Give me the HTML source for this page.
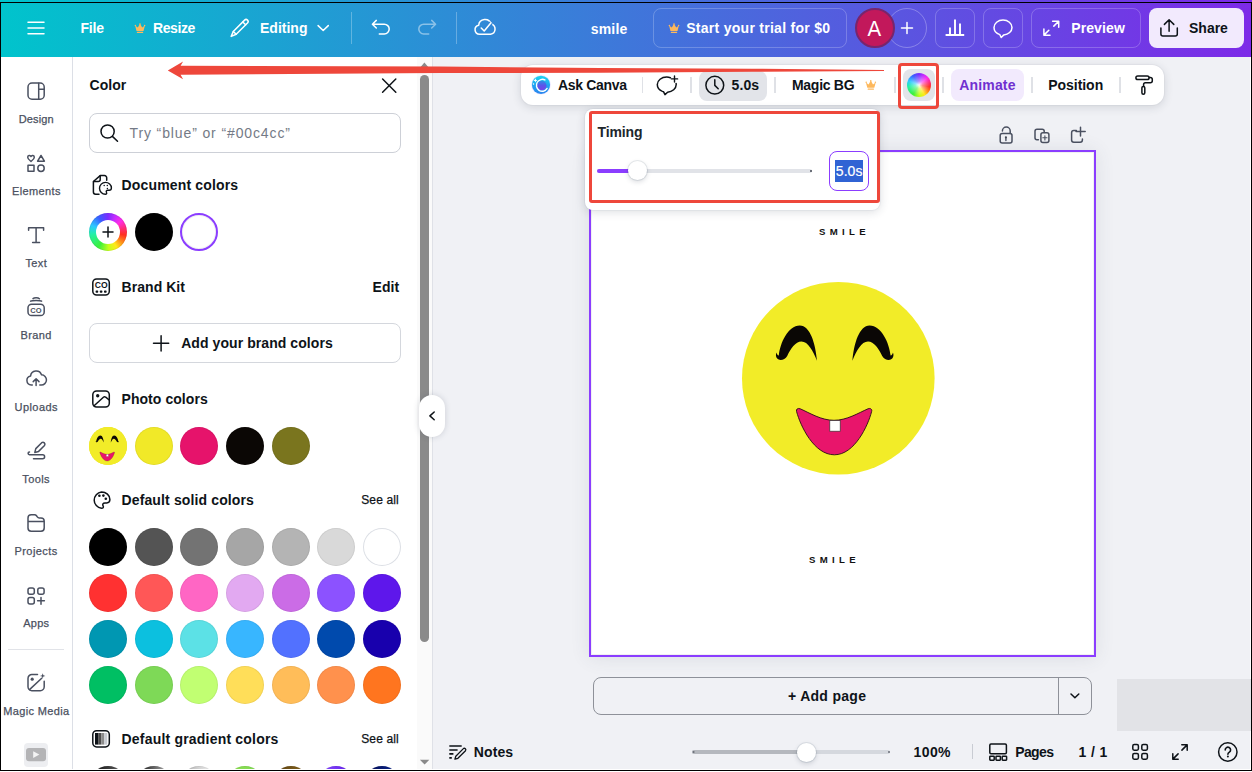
<!DOCTYPE html>
<html><head><meta charset="utf-8">
<style>
*{box-sizing:border-box;margin:0;padding:0}
html,body{width:1252px;height:772px;overflow:hidden}
body{position:relative;background:#f0f1f5;font-family:"Liberation Sans",sans-serif;color:#0e1318}
.a{position:absolute}
.t{position:absolute;white-space:pre;line-height:1;font-weight:700;font-size:14px}
svg{position:absolute;overflow:visible}
.w{color:#fff}
.ic{fill:none;stroke:#0e1318;stroke-width:1.5;stroke-linecap:round;stroke-linejoin:round}
.icw{fill:none;stroke:#fff;stroke-width:1.5;stroke-linecap:round;stroke-linejoin:round}
.ics{fill:none;stroke:#4a5060;stroke-width:1.5;stroke-linecap:round;stroke-linejoin:round}
.hb{position:absolute;top:8px;height:40px;border:1px solid rgba(255,255,255,.22);border-radius:8px}
.sl{position:absolute;font-size:11px;font-weight:400;color:#4a5060;line-height:1;white-space:pre;letter-spacing:.35px;-webkit-text-stroke:.25px #4a5060}
.sw{position:absolute;width:38px;height:38px;border-radius:50%;box-shadow:inset 0 0 0 1px rgba(0,0,0,.06)}
.sep{position:absolute;width:1.8px;top:77.3px;height:15.4px;background:#dfe1e6}
</style></head><body>

<!-- HEADER -->
<div class="a" id="hdr" style="left:0;top:0;width:1252px;height:57px;background:linear-gradient(90deg,#00c4cc 0%,#7d2ae8 100%)"></div>


<!-- header content -->
<svg class="a" style="left:0;top:0" width="1252" height="57" viewBox="0 0 1252 57">
 <g class="icw">
  <path d="M28 22.2H44M28 28H44M28 33.8H44"/>
  <!-- pencil -->
  <g transform="translate(231.2 36.4) rotate(-45)"><path d="M0 0L5 -2.05H21a2.05 2.05 0 0 1 0 4.1H5z"/><path d="M5 -2.05V2.05M18.4 -2.05V2.05"/></g>
  <!-- chevron -->
  <path d="M318.1 25.6l5.1 4.9 5.1-4.9"/>
  <!-- undo -->
  <path d="M376.3 20.4l-3.9 3.8 3.9 3.8M372.8 24.2h11.5a4.9 4.9 0 0 1 0 9.8H379.3"/>
  <!-- redo -->
  <g opacity=".45"><path d="M431.7 20.4l3.9 3.8-3.9 3.8M435.2 24.2h-11.5a4.9 4.9 0 0 0 0 9.8H428.7"/></g>
  <!-- cloud -->
  <path d="M479.6 34.3a4.6 4.6 0 0 1-.9-9.1 6.3 6.3 0 0 1 12.3-1.3 5.3 5.3 0 0 1-.5 10.4z"/>
  <path d="M485.6 29.6l5.4-6.8" stroke="#3186d7" stroke-width="4.2" stroke-linecap="butt"/><path d="M481.2 28l3 3 6.8-8.2"/>
  <!-- chart -->
  <path d="M945.6 35h18.6M950 34.5v-7M955 34.5v-15M960 34.5v-11" stroke-width="1.9" stroke-linecap="butt"/>
  <!-- comment -->
  <path d="M1003 20.1c5 0 9 3.3 9 7.4 0 3.9-3.6 7-8.2 7.4l-2.6 2.6-1.4-2.9c-3.4-1.1-5.8-3.9-5.8-7.100000000000001 0-4.100000000000001 4-7.4 9-7.4z"/>
  <!-- expand -->
  <path d="M1052.6 21.2h6.1v6.1M1058.4 21.5l-4.6 4.6M1050 35.2h-6.1v-6.1M1044.2 34.9l4.6-4.6"/>
  <!-- plus -->
  <path d="M901.5 27.9h11M907 22.4v11"/>
 </g>
 <line x1="351.5" y1="12" x2="351.5" y2="44" stroke="rgba(255,255,255,.28)"/>
 <line x1="456.5" y1="12" x2="456.5" y2="44" stroke="rgba(255,255,255,.28)"/>
 <!-- crowns -->
 <g id="crown" fill="#fdb85c" transform="translate(134.6 23.3)"><path d="M1.9 7.7L.5 2.3 3.2 4.3 5.4.4 7.6 4.3l2.7-2 -1.4 5.4z"/><circle cx=".8" cy="2.2" r=".75"/><circle cx="5.4" cy=".8" r=".8"/><circle cx="10" cy="2.2" r=".75"/><rect x="2.2" y="8.5" width="6.4" height="1.1" rx=".4"/></g>
 <use href="#crown" x="534" y="0"/>
</svg>
<span class="t w" style="left:80.5px;top:21.2px;letter-spacing:-.2px">File</span>
<span class="t w" style="left:153px;top:21.2px;letter-spacing:-.39px">Resize</span>
<span class="t w" style="left:260px;top:21.2px">Editing</span>
<span class="t w" style="left:590.7px;top:22px;letter-spacing:.19px">smile</span>
<div class="hb" style="left:653px;width:194px"></div>
<span class="t w" style="left:686.2px;top:21.2px;letter-spacing:.28px">Start your trial for $0</span>
<div class="a" style="left:887px;top:7.5px;width:40px;height:40px;border-radius:50%;border:1px solid rgba(255,255,255,.28)"></div>
<div class="a" style="left:855px;top:7.5px;width:40px;height:40px;border-radius:50%;background:#c2185b;border:2px solid #78256c"></div>
<span class="t w" style="left:867.4px;top:18.3px;font-size:22px;font-weight:400;transform:scaleX(.93);transform-origin:50% 50%">A</span>
<div class="hb" style="left:935px;width:40px"></div>
<div class="hb" style="left:983px;width:40px"></div>
<div class="hb" style="left:1031px;width:110px"></div>
<span class="t w" style="left:1071.2px;top:21.2px;letter-spacing:.12px">Preview</span>
<div class="a" style="left:1149px;top:8px;width:95.3px;height:40.4px;border-radius:8px;background:#f2eafd"></div>
<svg class="a" style="left:1149px;top:8px" width="96" height="41" viewBox="1149 8 96 41"><g class="ic">
 <path d="M1160.9 27.9v6a2 2 0 0 0 2 2h12.4a2 2 0 0 0 2-2v-6M1169.1 31.2v-11.4M1164.4 24.4l4.7-4.7 4.7 4.7"/></g></svg>
<span class="t" style="left:1189px;top:21.2px">Share</span>

<!-- SIDEBAR -->
<div class="a" id="side" style="left:0;top:57px;width:73px;height:715px;background:#fff;border-right:1px solid #dcdfe6"></div>


<!-- sidebar content -->
<svg class="a" style="left:0;top:57px" width="73" height="715" viewBox="0 57 73 715">
 <g class="ics">
  <!-- design -->
  <rect x="28" y="83" width="16.2" height="16.2" rx="4"/><path d="M38.7 83.2v15.8M38.9 89.300000000000004h5.1"/>
  <!-- elements -->
  <path d="M31 161.4c-1.2-1-3.300000000000001-2.4-3.300000000000001-4.2a1.7 1.7 0 0 1 3.300000000000001-.6 1.7 1.7 0 0 1 3.300000000000001.6c0 1.8-2.100000000000001 3.2-3.300000000000001 4.2z"/>
  <path d="M41 155.5l3.4 5.7h-6.8z"/>
  <rect x="28" y="165.2" width="6" height="6"/>
  <circle cx="41" cy="168.2" r="3.2"/>
  <!-- text -->
  <path d="M28.6 230.2v-2.4h15v2.4M36.1 227.8v14.600000000000001M32.6 242.4h7"/>
  <!-- brand -->
  <rect x="28" y="304.2" width="16.2" height="11.4" rx="3.6"/>
  <path d="M30.6 301.2c1.4-.9 9.6-.9 11 0M33 298.6c1.2-1 5.2-1 6.4.1"/>
  <!-- uploads -->
  <path d="M32.3 385h-1a4.6 4.6 0 0 1-.7-9.1 5.6 5.6 0 0 1 10.9-1.100000000000001 5.1 5.1 0 0 1-.3 10.200000000000001h-1.4"/>
  <path d="M36.1 385.6v-6.8M33.2 381.6l2.9-2.9 2.9 2.9"/>
  <!-- tools -->
  <path d="M34.800000000000004 452.4l1-3.8 5.9-5.9a2 2 0 0 1 2.8 2.8l-5.9 5.9z"/>
  <path d="M33.6 454.7h-4.1a1.4 1.4 0 0 1 0-2.800000000000001M29.4 454.7h13.2a2 2 0 0 1 0 4H33.5"/>
  <!-- projects -->
  <path d="M28 528v-10a3.200000000000001 3.200000000000001 0 0 1 3.200000000000001-3.200000000000001h3.3a2.4 2.4 0 0 1 2 1l.8 1.1a2.4 2.4 0 0 0 2 1h1.7a3.200000000000001 3.200000000000001 0 0 1 3.200000000000001 3.200000000000001V528a3.200000000000001 3.200000000000001 0 0 1-3.200000000000001 3.200000000000001h-9.8A3.200000000000001 3.200000000000001 0 0 1 28 528zM28 521.6h16.2"/>
  <!-- apps -->
  <rect x="28" y="588" width="6.300000000000001" height="6.300000000000001" rx="2"/><rect x="37.800000000000004" y="588" width="6.300000000000001" height="6.300000000000001" rx="2"/><rect x="28" y="597.6" width="6.300000000000001" height="6.300000000000001" rx="2"/>
  <path d="M41 597.4v6.800000000000001M37.6 600.8h6.800000000000001"/>
  <!-- magic media -->
  <path d="M37.5 674.5h-5.6a3.9 3.9 0 0 0-3.9 3.9v8.4a3.9 3.9 0 0 0 3.9 3.9h8.4a3.9 3.9 0 0 0 3.9-3.9v-5.6"/>
  <path d="M29.5 689.6l12.2-11.3"/>
 </g>
 <circle cx="32.2" cy="679.2" r="1.6" fill="#4a5060"/>
 <path d="M42.7 673.2l.7 2 2 .7-2 .7-.7 2-.7-2-2-.7 2-.7z" fill="#4a5060"/>
 <text x="36.1" y="313" text-anchor="middle" font-size="7.5" font-weight="700" fill="#4a5060" font-family="Liberation Sans" letter-spacing=".3">CO</text>
 <line x1="8" y1="649.5" x2="64" y2="649.5" stroke="#e1e3e8"/>
 <!-- yt -->
 <rect x="24" y="743" width="24" height="24" rx="4" fill="#edeef1"/>
 <rect x="26" y="748" width="20" height="13.2" rx="3" fill="#b4b4b6"/>
 <path d="M33.2 751.2l6.2 3.4-6.2 3.4z" fill="#f4f4f4"/>
</svg>
<span class="sl" style="left:18.700000000000003px;top:114px;letter-spacing:.16px">Design</span>
<span class="sl" style="left:12px;top:186.1px;letter-spacing:.37px">Elements</span>
<span class="sl" style="left:25.4px;top:258px;letter-spacing:.4px">Text</span>
<span class="sl" style="left:20.5px;top:329.8px;letter-spacing:.37px">Brand</span>
<span class="sl" style="left:14.5px;top:401.8px;letter-spacing:.45px">Uploads</span>
<span class="sl" style="left:22.3px;top:473.5px;letter-spacing:.38px">Tools</span>
<span class="sl" style="left:14.5px;top:545.8px;letter-spacing:.43px">Projects</span>
<span class="sl" style="left:23.2px;top:617.8px;letter-spacing:.26px">Apps</span>
<span class="sl" style="left:3.3px;top:706px;letter-spacing:.35px">Magic Media</span>

<!-- PANEL -->
<div class="a" id="panel" style="left:73px;top:57px;width:360px;height:715px;background:#fff;border-right:1px solid #dfe1e7"></div>


<!-- panel content -->
<div class="a" style="left:417px;top:57px;width:15px;height:713px;background:#fafafa"></div>
<div class="a" style="left:420px;top:75px;width:9px;height:567px;border-radius:4.5px;background:#8a8a8a"></div>
<svg class="a" style="left:417px;top:57px" width="15" height="715" viewBox="417 57 15 715"><path d="M424.4 62.6l4 4.7h-8zM424.6 764.6l4.7-4.8h-9.4z" fill="#8a8a8a"/></svg>
<span class="t" style="left:89.5px;top:78px;letter-spacing:.04px">Color</span>
<svg class="a" style="left:380px;top:76px" width="20" height="20" viewBox="380 76 20 20"><path class="ic" d="M382.6 79l13.2 13.2M395.8 79l-13.2 13.2"/></svg>
<div class="a" style="left:89px;top:113px;width:312px;height:40px;border:1px solid #cdd0d7;border-radius:8px;background:#fff"></div>
<svg class="a" style="left:98px;top:122px" width="22" height="22" viewBox="98 122 22 22"><g class="ic"><circle cx="107.6" cy="131.5" r="6.6"/><path d="M112.4 136.4l5.1 4.9"/></g></svg>
<span class="t" style="left:129.5px;top:126px;font-size:14px;font-weight:400;color:#747a86;letter-spacing:.88px">Try “blue” or “#00c4cc”</span>

<svg class="a" style="left:73px;top:57px" width="360" height="715" viewBox="73 57 360 715">
 <g class="ic">
  <!-- doc colors -->
  <path d="M106.7 180.2v-2.4a2.2 2.2 0 0 0-2.2-2.2h-4.3l-6.8 5.9v10.5a2.200000000000001 2.200000000000001 0 0 0 2.200000000000001 2.200000000000001h3.4"/>
  <path d="M100.2 175.8v3.8a2 2 0 0 1-2 2h-4.6"/>
  <path d="M105.4 182.4a5.9 5.9 0 0 0 0 11.8c1.2 0 1.6-.9 1.100000000000001-1.7-.7-1.100000000000001 0-2.2 1.3-2.2h1.3a2.4 2.4 0 0 0 2.3-2.4c0-3-2.7-5.5-6-5.5z" stroke-width="1.4"/>
  <!-- brand kit -->
  <rect x="92.8" y="278.9" width="16.5" height="16.2" rx="3.8"/>
  <!-- photo -->
  <rect x="92.8" y="390.9" width="16.5" height="16.2" rx="3.8"/>
  <path d="M94.10000000000001 405.8l9.3-8.6a1.7 1.7 0 0 1 2.3 0l3.5 2.8"/>
  <!-- palette -->
  <path d="M101.5 492a8.2 8.2 0 0 0 0 16.3c1.7 0 2.3-1.3 1.6-2.4-1-1.6 0-3 1.8-3h1.8a3.4 3.4 0 0 0 3.200000000000001-3.4c0-4.2-3.8-7.5-8.4-7.5z"/>
  <!-- gradient -->
  <rect x="92.8" y="730.7" width="16.5" height="16.2" rx="3.8"/>
  <!-- plus for brand -->
  <path d="M153.5 343.3h15.2M161.1 335.7v15.2"/>
 </g>
 <g fill="#0e1318">
  <circle cx="104.2" cy="185.6" r=".75"/><circle cx="107.3" cy="185.6" r=".75"/><circle cx="107.4" cy="188.5" r=".75"/>
  <rect x="95.6" y="290.6" width="2.6" height="2.2" rx=".7"/><rect x="99.80000000000001" y="290.6" width="2.6" height="2.2" rx=".7"/><rect x="104" y="290.6" width="2.6" height="2.2" rx=".7"/>
  <circle cx="97.7" cy="395.8" r="1.7"/>
  <circle cx="99.4" cy="495.7" r="1.3"/><circle cx="103.4" cy="495.6" r="1.3"/><circle cx="105.80000000000001" cy="498.8" r="1.3"/>
 </g>
 <text x="101.2" y="288.4" text-anchor="middle" font-size="8.6" font-weight="700" fill="#0e1318" font-family="Liberation Sans" letter-spacing="0">CO</text>
 <rect x="95" y="733" width="3.2" height="11.6" fill="#0e1318"/><rect x="98.2" y="733" width="3" height="11.6" fill="#4d4d4d"/><rect x="101.2" y="733" width="3" height="11.6" fill="#8c8c8c"/><rect x="104.2" y="733" width="3" height="11.6" fill="#c9ccd2"/>
</svg>
<span class="t" style="left:121.5px;top:178px;letter-spacing:.16px">Document colors</span>
<div class="sw" style="left:89px;top:213px;background:conic-gradient(from 0deg,#7a2cff 0deg,#c42cff 25deg,#ff2de6 50deg,#ff2d6a 80deg,#ff3020 100deg,#ff8a1a 125deg,#ffe81a 150deg,#c4ff1a 178deg,#3cf03c 212deg,#22f0a8 262deg,#2cc8ff 292deg,#3a5cff 328deg,#7a2cff 360deg)"></div>
<div class="a" style="left:96px;top:220px;width:24px;height:24px;border-radius:50%;background:#fff"></div>
<svg class="a" style="left:100px;top:224px" width="16" height="16" viewBox="0 0 16 16"><path class="ic" d="M3 8h10M8 3v10"/></svg>
<div class="sw" style="left:134.67px;top:213px;background:#000"></div>
<div class="sw" style="left:180.33px;top:213px;background:#fff;border:2px solid #8b3dff"></div>
<span class="t" style="left:121.5px;top:280.35px;letter-spacing:.06px">Brand Kit</span>
<span class="t" style="left:372.5px;top:280.35px;letter-spacing:.07px">Edit</span>
<div class="a" style="left:89px;top:323px;width:312px;height:40px;border:1px solid #d4d7dd;border-radius:8px"></div>
<span class="t" style="left:181.2px;top:336.1px;letter-spacing:.07px">Add your brand colors</span>
<span class="t" style="left:121.5px;top:392.35px;letter-spacing:.06px">Photo colors</span>
<span class="t" style="left:121.5px;top:493.35px;letter-spacing:.13px">Default solid colors</span>
<span class="t" style="left:361.2px;top:494.3px;font-size:12px;font-weight:400;letter-spacing:.15px;-webkit-text-stroke:.25px #0e1318">See all</span>
<span class="t" style="left:121.5px;top:732.1px;letter-spacing:.2px">Default gradient colors</span>
<span class="t" style="left:361.2px;top:733.1px;font-size:12px;font-weight:400;letter-spacing:.15px;-webkit-text-stroke:.25px #0e1318">See all</span>
<div class="sw" style="left:89.00px;top:528px;background:#000000"></div>
<div class="sw" style="left:134.67px;top:528px;background:#545454"></div>
<div class="sw" style="left:180.33px;top:528px;background:#737373"></div>
<div class="sw" style="left:226.00px;top:528px;background:#a6a6a6"></div>
<div class="sw" style="left:271.67px;top:528px;background:#b4b4b4"></div>
<div class="sw" style="left:317.33px;top:528px;background:#d9d9d9"></div>
<div class="sw" style="left:363.00px;top:528px;background:#ffffff;box-shadow:inset 0 0 0 1px #dcdfe5"></div>
<div class="sw" style="left:89.00px;top:574.25px;background:#ff3131"></div>
<div class="sw" style="left:134.67px;top:574.25px;background:#ff5757"></div>
<div class="sw" style="left:180.33px;top:574.25px;background:#ff66c4"></div>
<div class="sw" style="left:226.00px;top:574.25px;background:#e2a9f1"></div>
<div class="sw" style="left:271.67px;top:574.25px;background:#cb6ce6"></div>
<div class="sw" style="left:317.33px;top:574.25px;background:#8c52ff"></div>
<div class="sw" style="left:363.00px;top:574.25px;background:#5e17eb"></div>
<div class="sw" style="left:89.00px;top:620px;background:#0097b2"></div>
<div class="sw" style="left:134.67px;top:620px;background:#0cc0df"></div>
<div class="sw" style="left:180.33px;top:620px;background:#5ce1e6"></div>
<div class="sw" style="left:226.00px;top:620px;background:#38b6ff"></div>
<div class="sw" style="left:271.67px;top:620px;background:#5271ff"></div>
<div class="sw" style="left:317.33px;top:620px;background:#004aad"></div>
<div class="sw" style="left:363.00px;top:620px;background:#1800ad"></div>
<div class="sw" style="left:89.00px;top:665.75px;background:#00bf63"></div>
<div class="sw" style="left:134.67px;top:665.75px;background:#7ed957"></div>
<div class="sw" style="left:180.33px;top:665.75px;background:#c1ff72"></div>
<div class="sw" style="left:226.00px;top:665.75px;background:#ffde59"></div>
<div class="sw" style="left:271.67px;top:665.75px;background:#ffbd59"></div>
<div class="sw" style="left:317.33px;top:665.75px;background:#ff914d"></div>
<div class="sw" style="left:363.00px;top:665.75px;background:#ff751f"></div>
<div class="sw" style="left:89.00px;top:766px;background:linear-gradient(90deg,#000,#737373)"></div>
<div class="sw" style="left:134.67px;top:766px;background:linear-gradient(90deg,#000,#c9c9c9)"></div>
<div class="sw" style="left:180.33px;top:766px;background:linear-gradient(90deg,#a6a6a6,#fff)"></div>
<div class="sw" style="left:226.00px;top:766px;background:linear-gradient(90deg,#8ee04e,#7ed957)"></div>
<div class="sw" style="left:271.67px;top:766px;background:linear-gradient(90deg,#5a3d10,#8a6a20)"></div>
<div class="sw" style="left:317.33px;top:766px;background:linear-gradient(90deg,#8c52ff,#5e17eb)"></div>
<div class="sw" style="left:363.00px;top:766px;background:linear-gradient(90deg,#050a4a,#0a2a9a)"></div>
<div class="sw" style="left:89.00px;top:426.75px;background:#f1e928"></div>
<div class="sw" style="left:134.67px;top:426.75px;background:#f1e928"></div>
<div class="sw" style="left:180.33px;top:426.75px;background:#e6136b"></div>
<div class="sw" style="left:226.00px;top:426.75px;background:#0b0705"></div>
<div class="sw" style="left:271.67px;top:426.75px;background:#7a751e"></div>

<!-- mini face -->
<svg class="a" style="left:89px;top:426.75px" width="38" height="38" viewBox="742 282 192.6 192.6"><use href="#facefeat"/></svg>
<!-- collapse handle -->
<div class="a" style="left:419px;top:395px;width:26px;height:42px;border-radius:13px;background:#fff;box-shadow:0 0 6px rgba(40,50,70,.18)"></div>
<svg class="a" style="left:419px;top:395px" width="26" height="42" viewBox="419 395 26 42"><path class="ic" d="M434.2 412l-4.300000000000001 3.9 4.300000000000001 3.9" stroke-width="1.6"/></svg>


<!-- MAIN -->
<!-- page -->
<div class="a" style="left:589px;top:150px;width:507px;height:507px;background:#fff;border:2px solid #8b3dff;box-shadow:0 1px 18px rgba(60,70,90,.11),inset 0 0 0 1px rgba(40,50,60,.07)"></div>
<svg class="a" style="left:589px;top:150px" width="507" height="507" viewBox="589 150 507 507">
 <defs><g id="facefeat">
  <circle cx="838.3" cy="378.3" r="96.3" fill="#f2ec28"/>
  <g fill="#0a0705"><path d="M777.2 358.6 C775.8 357 775.6 354.6 776.4 352.4 C776.8 354 777.6 355.2 778.8 355.6 C780 343 788 325.4 799.8 325.4 C810 325.4 815.5 343 817 360.8 C813 351 808 341.6 801.4 341.6 C795.5 341.6 790.5 349 787.2 356 C785 360 779.5 361 777.2 358.6 Z"/><path d="M 892.2 358.6 C 893.6 357.0 893.8 354.6 893.0 352.4 C 892.6 354.0 891.8 355.2 890.6 355.6 C 889.4 343.0 881.4 325.4 869.6 325.4 C 859.4 325.4 853.9 343.0 852.4 360.8 C 856.4 351.0 861.4 341.6 868.0 341.6 C 873.9 341.6 878.9 349.0 882.2 356.0 C 884.4 360.0 889.9 361.0 892.2 358.6 Z"/></g>
  <path d="M796.6 411.6c-.8-2.4 1.2-3.8 3.6-2.800000000000001 10 4.4 21 11.5 33.800000000000004 11.5s24-7.1 34-11.5c2.4-1 4.4.4 3.600000000000001 2.800000000000001-3.6 14-17 43.2-37.2 43.2-20.6 0-34-29.200000000000003-37.800000000000004-43.2z" fill="#e8156b" stroke="#2a0a14" stroke-width=".9"/>
  <rect x="829.8" y="420.6" width="10.4" height="10.6" fill="#fff" stroke="#333" stroke-width=".7"/>
 </g></defs>
 <use href="#facefeat"/>
</svg>
<span class="t" style="left:819px;top:227px;font-size:9.6px;letter-spacing:4.35px;color:#111">SMILE</span>
<span class="t" style="left:809px;top:555px;font-size:9.6px;letter-spacing:4.35px;color:#111">SMILE</span>
<!-- page icons -->
<svg class="a" style="left:990px;top:120px" width="110" height="30" viewBox="990 120 110 30"><g class="ics" stroke="#444a55" stroke-width="1.3">
 <rect x="1000.2" y="133.6" width="11.8" height="9.3" rx="2"/><path d="M1002.4 131a3.9 3.9 0 0 1 7.8 0v2.4"/><path d="M1005.9 137.6v3" stroke-width="1.4"/>
 <path d="M1038.4 139.8h-1.4a2 2 0 0 1-2-2v-6.6a2 2 0 0 1 2-2h5.2a2 2 0 0 1 2 2v1.2"/><rect x="1040.9" y="132.8" width="8" height="9.8" rx="2"/><path d="M1044.9 135.7v4.2M1042.8 137.8h4.2" stroke-width="1.1"/>
 <path d="M1076.4 130.5h-2.6a2.200000000000001 2.200000000000001 0 0 0-2.200000000000001 2.200000000000001v7.300000000000001a2.200000000000001 2.200000000000001 0 0 0 2.200000000000001 2.200000000000001h6.4a2.200000000000001 2.200000000000001 0 0 0 2.200000000000001-2.200000000000001v-1"/><path d="M1080.5 127.2v8.8M1076 131.6h9.200000000000001"/>
</g><circle cx="1005.9" cy="137.3" r="1.1" fill="#444a55"/></svg>

<!-- toolbar -->
<div class="a" style="left:521px;top:65px;width:643px;height:40px;background:#fff;border-radius:12px;box-shadow:0 0 0 1px rgba(64,87,109,.04),0 2px 10px rgba(40,50,70,.16)"></div>
<div class="a" style="left:699px;top:71px;width:68px;height:29.5px;border-radius:8px;background:#e2e4e9"></div>
<div class="a" style="left:903.2px;top:69px;width:32px;height:32px;border-radius:8px;background:#e2e4e9"></div>
<div class="a" style="left:951px;top:69px;width:73px;height:32px;border-radius:8px;background:#f2eafd"></div>
<div class="sep" style="left:641.6px"></div><div class="sep" style="left:690.1px"></div><div class="sep" style="left:774.1px"></div><div class="sep" style="left:894.1px"></div><div class="sep" style="left:942.4px"></div><div class="sep" style="left:1030.9px"></div><div class="sep" style="left:1118.9px"></div>
<!-- ask canva icon -->
<svg class="a" style="left:529px;top:73px" width="24" height="24" viewBox="529 73 24 24">
 <defs><linearGradient id="acg" x1="0" y1="0" x2="0" y2="1"><stop offset="0" stop-color="#1bd6ee"/><stop offset=".55" stop-color="#1fa2f2"/><stop offset="1" stop-color="#2b86ee"/></linearGradient>
 <linearGradient id="acp" x1="0" y1="0" x2="0" y2="1"><stop offset="0" stop-color="#2f8ee6"/><stop offset=".5" stop-color="#5b55ea"/><stop offset="1" stop-color="#7a43e6"/></linearGradient></defs>
 <circle cx="541" cy="84.8" r="9.8" fill="#c9b8ff" opacity=".35"/>
 <circle cx="541" cy="84.8" r="9.1" fill="url(#acg)"/>
 <circle cx="541.8" cy="85.5" r="4.7" fill="url(#acp)"/>
 <path d="M544.9 79.9c-1.3-.6-2.7-.7-4.1-.3-3 .9-4.800000000000001 4-4.2 7.100000000000001.7 3.100000000000001 3.600000000000001 5.100000000000001 6.7 4.5 1.6-.3 2.9-1.3 3.7-2.7" fill="none" stroke="#fff" stroke-width="1.5" stroke-linecap="round"/>
 <path d="M535.4 78.3l.6 1.5 1.5.6-1.5.6-.6 1.5-.6-1.5-1.5-.6 1.5-.6z" fill="#fff"/>
 <circle cx="533.5" cy="84.1" r=".75" fill="#fff"/>
</svg>
<span class="t" style="left:558px;top:78.2px;letter-spacing:-.32px">Ask Canva</span>
<svg class="a" style="left:520px;top:65px" width="645" height="40" viewBox="520 65 645 40"><g class="ic">
 <!-- comment plus -->
 <path d="M670.4 77.7c-1.2-.4-2.4-.6-3.7-.6-5.2 0-9.4 3.3-9.4 7.5 0 3 2.100000000000001 5.600000000000001 5.1 6.800000000000001l1.2.4 1.4 2.8 2.6-2.4c4.800000000000001-.4 8.6-3.600000000000001 8.6-7.600000000000001 0-.4 0-.7-.1-1.100000000000001"/>
 <path d="M674.5 75.9v6.1M671.4 78.9h6.2" stroke-width="1.4"/>
 <!-- clock -->
 <circle cx="714.8" cy="85.2" r="8.9"/><path d="M714.8 79.7v5.7l3.4 3.4"/>
 <!-- roller -->
 <rect x="1135.9" y="75.9" width="13.2" height="3.7" rx="1.85"/>
 <path d="M1149.3 77.5h1a2 2 0 0 1 2 2v1.3a2 2 0 0 1-2 2h-4.9a1.8 1.8 0 0 0-1.8 1.8v1.6"/>
 <rect x="1141.9" y="86.4" width="2.9" height="7.9" rx="1.45"/>
</g>
<use href="#crown" transform="translate(730.8 56.8)"/>
</svg>
<span class="t" style="left:731.5px;top:78.2px;letter-spacing:.12px">5.0s</span>
<span class="t" style="left:792px;top:78.2px;letter-spacing:-.29px">Magic BG</span>
<div class="a" style="left:907px;top:73px;width:24px;height:24px;border-radius:50%;background:conic-gradient(from 0deg,#7a2cff 0deg,#c42cff 25deg,#ff2de6 50deg,#ff2d6a 80deg,#ff3020 100deg,#ff8a1a 125deg,#ffe81a 150deg,#c4ff1a 178deg,#3cf03c 212deg,#22f0a8 262deg,#2cc8ff 292deg,#3a5cff 328deg,#7a2cff 360deg)"></div>
<div class="a" style="left:907px;top:73px;width:24px;height:24px;border-radius:50%;background:radial-gradient(circle,rgba(255,255,255,.95) 0%,rgba(255,255,255,.45) 22%,rgba(255,255,255,0) 62%)"></div>
<span class="t" style="left:959.2px;top:78.2px;letter-spacing:.18px;color:#7030d0">Animate</span>
<span class="t" style="left:1048.2px;top:78.2px;letter-spacing:-.03px">Position</span>

<!-- popup -->
<div class="a" style="left:585px;top:109px;width:295px;height:101px;background:#fff;border-radius:8px;box-shadow:0 0 0 1px rgba(64,87,109,.05),0 2px 10px rgba(40,50,70,.16)"></div>
<span class="t" style="left:597.5px;top:125px;letter-spacing:-.11px;color:#20262c">Timing</span>
<div class="a" style="left:597px;top:169px;width:215px;height:4px;border-radius:2px;background:#e1e3e8"></div>
<div class="a" style="left:597px;top:169px;width:40px;height:4px;border-radius:2px;background:#8b3dff"></div>
<div class="a" style="left:810px;top:170px;width:2px;height:2px;background:#6b6f78"></div>
<div class="a" style="left:627.6px;top:161.4px;width:19px;height:19px;border-radius:50%;background:#fff;box-shadow:0 0 0 1px rgba(64,87,109,.12),0 2px 5px rgba(40,50,70,.18)"></div>
<div class="a" style="left:829px;top:151px;width:40px;height:40px;border-radius:8px;border:1.5px solid #8b3dff;background:#fff"></div>
<div class="a" style="left:835px;top:160.2px;width:28px;height:21.4px;background:#3063d4"></div>
<span class="t w" style="left:835.8px;top:164.1px;font-weight:400;letter-spacing:.05px;-webkit-text-stroke:.2px #fff">5.0s</span>

<!-- add page -->
<div class="a" style="left:593px;top:677px;width:499px;height:38px;border:1px solid #8e9199;border-radius:8px"></div>
<div class="a" style="left:1058px;top:677px;width:1px;height:38px;background:#8e9199"></div>
<span class="t" style="left:788px;top:689.4px;letter-spacing:.29px">+ Add page</span>
<svg class="a" style="left:1066px;top:688px" width="18" height="16" viewBox="1066 688 18 16"><path class="ic" d="M1071 694l3.9 3.8 3.9-3.8" stroke-width="1.6"/></svg>
<div class="a" style="left:1117px;top:679px;width:134px;height:52px;background:#e2e3e7;z-index:51"></div>

<!-- bottom bar -->
<svg class="a" style="left:440px;top:735px" width="812" height="35" viewBox="440 735 812 35"><g class="ic">
 <path d="M449.3 746h12.4M449.3 750h8.3M449.3 753.9h4.1M449.3 757.9h2.5" stroke-linecap="butt" stroke-width="1.6"/>
 <path d="M454.9 759.2l.9-3 7.6-7.6a1.5 1.5 0 0 1 2.1 2.1l-7.6 7.6z" stroke-width="1.3"/>
 <rect x="989.8" y="744" width="16.6" height="9.8" rx="1.2"/>
 <rect x="989.8" y="756.2" width="4.4" height="4" rx=".6" stroke-width="1.5"/><rect x="996" y="756.2" width="4.4" height="4" rx=".6" stroke-width="1.5"/><rect x="1002.2" y="756.2" width="4.4" height="4" rx=".6" stroke-width="1.5"/>
 <rect x="1132.8" y="744.6" width="5.6" height="5.6" rx="1.4"/><rect x="1141.8" y="744.6" width="5.6" height="5.6" rx="1.4"/><rect x="1132.8" y="753.6" width="5.6" height="5.6" rx="1.4"/><rect x="1141.8" y="753.6" width="5.6" height="5.6" rx="1.4"/>
 <path d="M1181.8 744.8h5.4v5.4M1186.9 745.1l-5 5M1178.2 759.2h-5.4v-5.4M1173.1 758.9l5-5"/>
 <circle cx="1227.8" cy="752" r="9.2"/><path d="M1225.2 749.9a2.7 2.7 0 1 1 4.2 2.2c-.9.6-1.5 1.100000000000001-1.5 2.200000000000001" stroke-width="1.6"/>
</g>
<line x1="972.5" y1="744" x2="972.5" y2="759" stroke="#c9ccd3"/><circle cx="1227.9" cy="756.5" r="1" fill="#0e1318"/>
<rect x="692" y="750" width="198" height="4" rx="2" fill="#d5d8de"/>
<rect x="692" y="750" width="114" height="4" rx="2" fill="#b5b8be"/>
<circle cx="693.6" cy="752" r="1" fill="#6b6f78"/><circle cx="889" cy="752" r="1" fill="#6b6f78"/>
</svg>
<div class="a" style="left:797.2px;top:742.5px;width:19px;height:19px;border-radius:50%;background:#fff;box-shadow:0 0 0 1px rgba(64,87,109,.12),0 2px 5px rgba(40,50,70,.18)"></div>
<span class="t" style="left:473.7px;top:745px;letter-spacing:.14px">Notes</span>
<span class="t" style="left:913.5px;top:745px;letter-spacing:.42px">100%</span>
<span class="t" style="left:1015.2px;top:745px;letter-spacing:-.6px">Pages</span>
<span class="t" style="left:1078.5px;top:745px;letter-spacing:.4px">1 / 1</span>


<!-- annotations -->
<svg class="a" style="left:0;top:0;z-index:40" width="1252" height="772" viewBox="0 0 1252 772">
 <path d="M167.8 70.4L183.1 61.6 180.6 65.7 440 66.6 600 68 752 68.7 884 70 884 71 752 71.7 600 72.8 440 73.1 180.6 74.7 183.1 79.3z" fill="#ee473b"/>
 <rect x="590.5" y="112.5" width="288" height="89" rx="1.5" fill="none" stroke="#ee473b" stroke-width="3"/>
 <rect x="899.5" y="64.5" width="38" height="43" rx="2.5" fill="none" stroke="#ee473b" stroke-width="3"/>
</svg>

<!-- FRAME -->
<div class="a" style="left:0;top:771px;width:1252px;height:1px;background:#fff;z-index:50"></div>
<div class="a" style="left:1250px;top:57px;width:1px;height:713px;background:#fff;z-index:50"></div>
<div class="a" style="left:1px;top:769px;width:1250px;height:1px;background:#fff;z-index:50"></div>
<div class="a" style="left:0;top:2px;width:1252px;height:769px;border:1px solid #000;z-index:52"></div>
</body></html>
